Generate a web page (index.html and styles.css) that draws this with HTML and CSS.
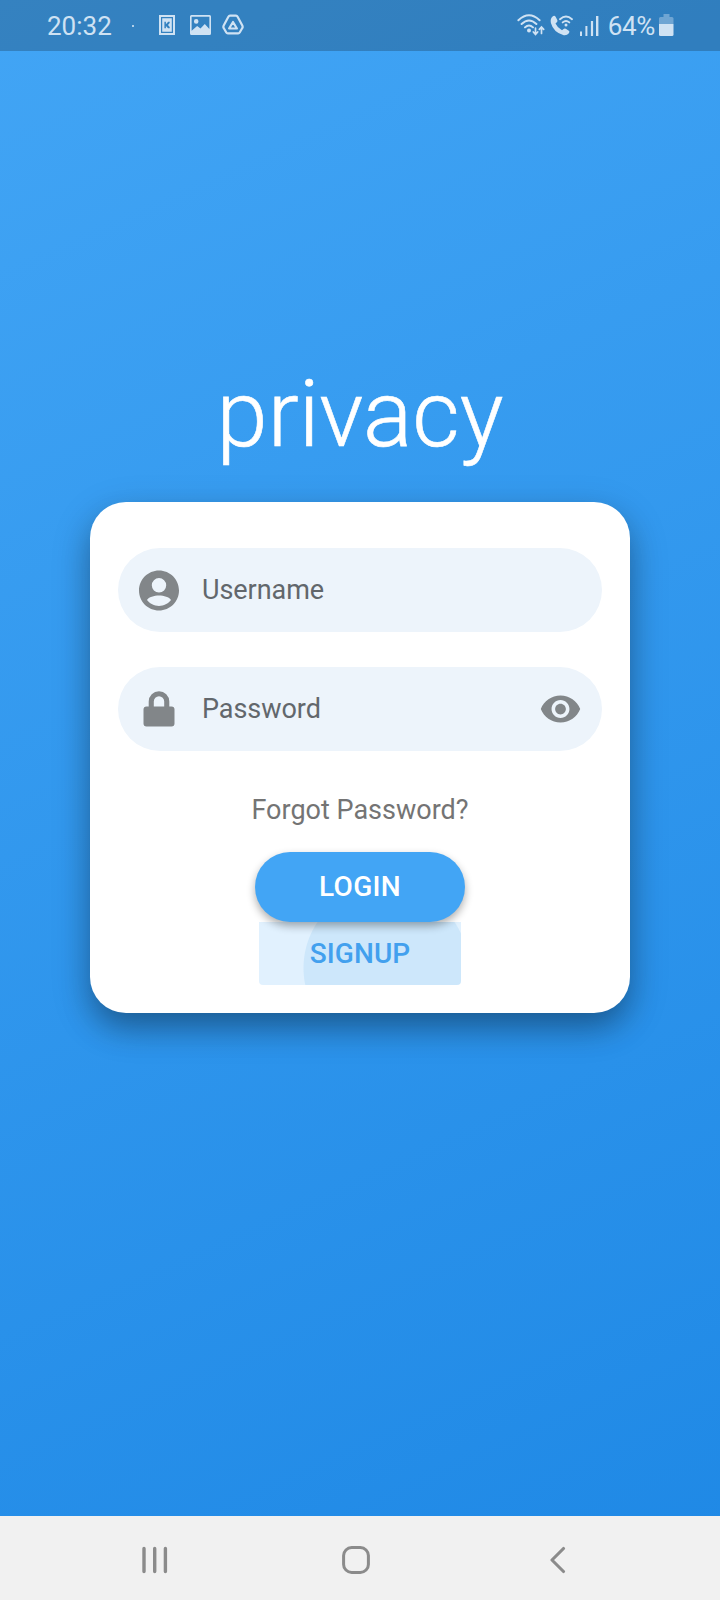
FILE: index.html
```html
<!DOCTYPE html>
<html lang="en">
<head>
<meta charset="utf-8">
<title>privacy</title>
<link rel="stylesheet" href="styles.css">
</head>
<body>
<div class="screen">
  <header class="status">
    <div class="status-left">
      <span class="time">20:32</span>
      <span class="dot"></span>
      <svg class="ic-k" width="16" height="20" viewBox="0 0 16 20"><path fill="currentColor" fill-rule="evenodd" d="M0 0h16v20H0zM2 2v16h12V2z"/><path fill="currentColor" fill-rule="evenodd" d="M3.200 3.200h9.600v13.600H3.200zM5.400 6.800v6.400h1.500v-2.300l2.200 2.300h1.600V12L9 10l1.700-2V6.800H9.200L6.900 9.200V6.800z"/></svg>
      <svg class="ic-pic" width="21" height="20" viewBox="0 0 22 20" preserveAspectRatio="none"><path fill="currentColor" fill-rule="evenodd" d="M1.500 0h19A1.500 1.500 0 0 1 22 1.500v17a1.500 1.500 0 0 1-1.500 1.500h-19A1.500 1.500 0 0 1 0 18.500v-17A1.500 1.500 0 0 1 1.500 0zM1.700 1.700v14L7.500 11l3.500 2.500L15.500 9l4.800 5V1.700zM6.500 4a2.400 2.400 0 1 1 0 4.800 2.400 2.400 0 0 1 0-4.800z"/></svg>
      <svg class="ic-drive" width="22" height="21" viewBox="0 0 22 21"><g fill="none" stroke="currentColor" stroke-width="2.200" stroke-linejoin="round"><path d="M8 1.600h6Q15 1.600 15.600 2.700L20.300 11.500Q21 13 20.300 14L17.700 18.500Q17.200 19.400 16.200 19.400H5.800Q4.800 19.400 4.300 18.500L1.700 14Q1 13 1.700 11.500L6.400 2.700Q7 1.600 8 1.600z"/><path d="M11 8l3.900 6.500H7.100z"/></g></svg>
    </div>
    <div class="status-right">
      <svg class="ic-wifi" width="28" height="22" viewBox="0 0 28 22"><g fill="none" stroke="currentColor" stroke-width="2" stroke-linecap="round"><path d="M1.400 6.200Q12-3.600 22.600 6.200M4.600 10Q12 3 19.400 10M8 13.400q4-4 8 0"/><path stroke-width="1.700" d="M18.500 14v6M16.300 18l2.200 2.400 2.200-2.400M24.500 19.500v-6.300M22.300 15.400l2.200-2.400 2.200 2.400"/></g><circle cx="12" cy="16.400" r="2" fill="currentColor"/></svg>
      <svg class="ic-call" width="24" height="22" viewBox="0 0 24 22"><path fill="currentColor" d="M2.600 2.400Q4.500 1 5.600 2.800L7.300 6q.6 1.300-.5 2.200L5.500 9.500q2 4.500 6.500 6.700l1.600-1.300q1-.9 2.200-.1l3 2q1.300 1 .1 2.400-2.100 2.600-5.200 2Q3.500 18.500.9 9 0 4.500 2.600 2.400z"/><g fill="none" stroke="currentColor" stroke-width="1.900" stroke-linecap="round"><path d="M10 5.200Q16-.2 22 5.200M12.700 8.400q3.300-2.800 6.600 0"/></g><circle cx="16" cy="11" r="1.500" fill="currentColor"/></svg>
      <svg class="ic-signal" width="19" height="20" viewBox="0 0 19 20"><path fill="currentColor" d="M0 15.500h2V20H0zM5.400 10h2v10h-2zM10.900 5h2.200v15h-2.200zM16 0h2.400v20H16z"/></svg>
      <span class="pct">64%</span>
      <svg class="ic-batt" width="15" height="22" viewBox="0 0 15 22"><path fill="currentColor" opacity=".4" d="M4.500 0h6v3H13q1.500 0 1.500 1.500V10H0V4.500Q0 3 1.500 3h3z"/><path fill="currentColor" d="M0 10h14.500v10.500q0 1.500-1.500 1.500H1.500Q0 22 0 20.500z"/></svg>
    </div>
  </header>
  <main class="app">
    <h1 class="title">privacy</h1>
    <section class="card">
      <div class="field">
        <svg class="lead" width="49" height="49" viewBox="0 0 24 24"><path fill="currentColor" d="M12 2C6.480 2 2 6.480 2 12s4.480 10 10 10 10-4.480 10-10S17.520 2 12 2zm0 3.800a3.600 3.600 0 1 1 0 7.200 3.600 3.600 0 0 1 0-7.200zm0 13.900c-2.400 0-4.600-1.100-6-2.900.8-1.500 3.600-2.300 6-2.300s5.200.8 6 2.300c-1.400 1.800-3.600 2.900-6 2.900z"/></svg>
        <span class="label">Username</span>
      </div>
      <div class="field">
        <svg class="lead" width="32" height="36" viewBox="0 0 32 36"><path fill="currentColor" fill-rule="evenodd" d="M5.700 15.500V10.500a10.300 10.300 0 0 1 20.600 0v5H28.500a3 3 0 0 1 3 3v14a3 3 0 0 1-3 3h-25a3 3 0 0 1-3-3v-14a3 3 0 0 1 3-3zM10.800 15.500h10.400v-5a5.200 5.200 0 0 0-10.400 0z"/></svg>
        <span class="label">Password</span>
        <svg class="eye" width="43" height="44" viewBox="0 0 24 24"><path fill="currentColor" d="M12 4.500C7 4.500 2.730 7.610 1 12c1.730 4.390 6 7.500 11 7.500s9.270-3.110 11-7.500c-1.730-4.390-6-7.500-11-7.500zM12 17c-2.760 0-5-2.240-5-5s2.240-5 5-5 5 2.240 5 5-2.240 5-5 5zm0-8c-1.660 0-3 1.340-3 3s1.340 3 3 3 3-1.340 3-3-1.340-3-3-3z"/></svg>
      </div>
      <div class="forgot">Forgot Password?</div>
      <div class="login">LOGIN</div>
      <div class="signup">SIGNUP</div>
    </section>
  </main>
  <nav class="nav">
    <svg width="26" height="28" viewBox="0 0 26 28"><path stroke="currentColor" stroke-width="3.400" stroke-linecap="round" d="M2 2.500v23M12.700 2.500v23M23.400 2.500v23"/></svg>
    <svg class="home" width="28" height="28" viewBox="0 0 28 28"><rect x="1.600" y="1.600" width="24.800" height="24.800" rx="8" fill="none" stroke="currentColor" stroke-width="3"/></svg>
    <svg width="16" height="28" viewBox="0 0 16 28"><path fill="none" stroke="currentColor" stroke-width="3.100" stroke-linecap="round" stroke-linejoin="round" d="M13.500 2.500L2 14l11.500 11.500"/></svg>
  </nav>
</div>
</body>
</html>
```
FILE: styles.css
```css
* { box-sizing: border-box; }
body { margin: 0; font-family: Roboto, "Liberation Sans", sans-serif; }
svg { display: block; flex: none; }
.screen {
  width: 720px;
  height: 1600px;
  display: flex;
  flex-direction: column;
  background: linear-gradient(155.8deg, #42a5f5, #1e88e5);
  overflow: hidden;
}
.status {
  height: 51px;
  flex: none;
  display: flex;
  justify-content: space-between;
  padding: 0 46px;
  background: rgba(20, 36, 50, .27);
  color: #cfe2f3;
  font-size: 26px;
  line-height: 53px;
}
.status-left, .status-right { display: flex; align-items: flex-start; }
.time { width: 86px; padding-left: 1px; }
.dot { width: 2px; height: 2px; margin-top: 25px; background: currentColor; opacity: .8; }
.ic-k { margin: 15px 0 0 25px; }
.ic-pic { margin: 15px 0 0 15px; }
.ic-drive { margin: 14px 0 0 11px; }
.ic-wifi { margin-top: 14px; }
.ic-call { margin: 14px 0 0 5px; }
.ic-signal { margin: 16px 0 0 6px; }
.pct { margin-left: 9px; letter-spacing: -.3px; }
.ic-batt { margin: 14px 0 0 4px; }
.app { flex: 1; display: flex; flex-direction: column; align-items: center; }
.title {
  margin: 308px 0 0;
  height: 143px;
  line-height: 112px;
  font-size: 92px;
  font-weight: 300;
  color: #fff;
  -webkit-text-stroke: .6px #fff;
}
.card {
  width: 540px;
  height: 511px;
  margin-top: .4px;
  padding: 46px 28px 0;
  border-radius: 36px;
  background: #fff;
  box-shadow: 0 16px 30px -2px rgba(0, 0, 0, .27), 0 12px 40px rgba(0, 0, 0, .17);
  display: flex;
  flex-direction: column;
  align-items: center;
}
.field {
  width: 484px;
  height: 84px;
  margin-bottom: 35px;
  padding: 0 20px 0 17px;
  border-radius: 42px;
  background: #edf4fb;
  color: #828689;
  display: flex;
  align-items: center;
}
.lead { width: 48px; }
.label { flex: 1; margin-left: 19px; font-size: 27px; letter-spacing: -.05px; color: #62676c; }
.forgot { margin-top: 8px; line-height: 32px; font-size: 27px; color: #747474; }
.login {
  width: 210px;
  height: 70px;
  margin-top: 26px;
  border-radius: 35px;
  background: #42a5f5;
  color: #fff;
  font-size: 28px;
  letter-spacing: .3px;
  font-weight: 500;
  line-height: 69px;
  text-align: center;
  box-shadow: 0 4px 9px rgba(0, 0, 0, .32);
  z-index: 1;
}
.signup {
  width: 202px;
  height: 63px;
  border-radius: 0 0 4px 4px;
  background: radial-gradient(circle at 127px 46px, #cde7fb 82px, #e1f1fe 83px);
  color: #42a0ee;
  font-size: 28px;
  letter-spacing: .1px;
  font-weight: 500;
  line-height: 63px;
  text-align: center;
}
.nav {
  height: 84px;
  flex: none;
  display: flex;
  justify-content: space-between;
  align-items: center;
  padding: 4px 154px 0 142px;
  background: #f1f1f1;
  color: #8b8b8b;
}
.home { margin-right: 6px; }
```
